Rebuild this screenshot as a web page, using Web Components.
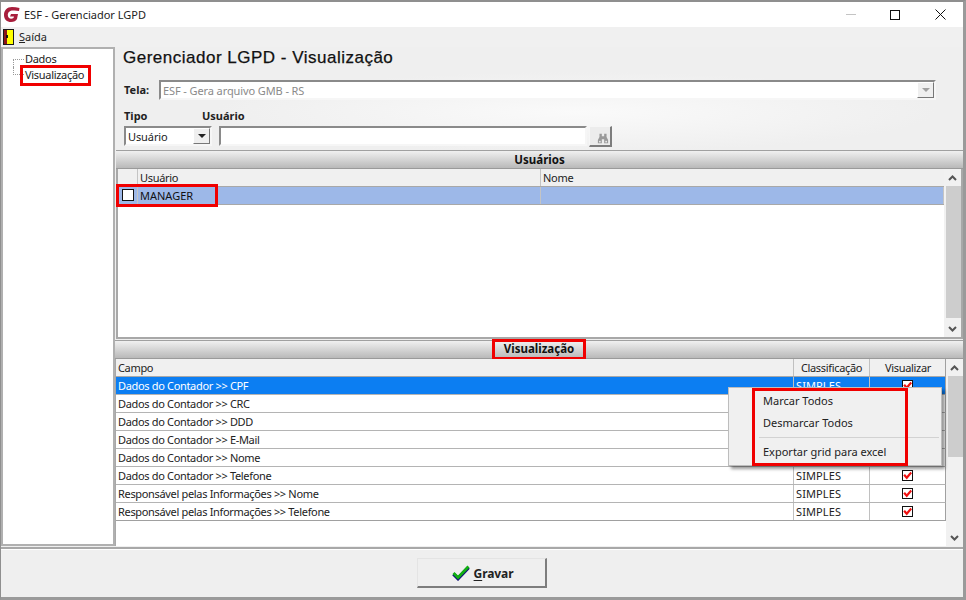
<!DOCTYPE html>
<html lang="pt-BR">
<head>
<meta charset="utf-8">
<title>ESF - Gerenciador LGPD</title>
<style>
  html, body { margin: 0; height: 100%; overflow: hidden; background: #fff; }
  body { font: 11px "Noto Sans", "Liberation Sans", sans-serif; color: #111; }
</style>
</head>
<body>
<lgpd-window></lgpd-window>

<script>
const check = `<svg viewBox="0 0 12 12"><path d="M1.500 5 L5 9 L11 2" fill="none" stroke="#f01010" stroke-width="3"/></svg>`;

class TitleBar extends HTMLElement {
  constructor() {
    super();
    this.attachShadow({ mode: "open" });
    this.shadowRoot.innerHTML = `
      <style>
        :host { display: flex; align-items: center; height: 25px; background: #fff; padding-left: 2px; }
        svg { display: block; }
        .title { margin-left: 4px; padding-bottom: 1px; font-size: 11px; color: #222; flex: 1; }
        .ctl { width: 45px; height: 25px; display: flex; align-items: center; justify-content: center; }
        .max svg { margin-right: 1px; }
      </style>
      <svg width="17" height="17" viewBox="0 0 17 17">
        <path d="M9 1 C4 1 1 4.500 1 9 C1 13.500 4 16 8 16 C11 16 13 15 14 13 L15 8 L8 8 L7 10.500 L11 10.500 L10.500 12 C8 13.500 4.800 12.500 4.800 9 C4.800 5.500 8 3.800 11.500 4.600 L16 5 L16.500 2 C14 1.300 11.500 1 9 1 Z" fill="#a81e3c"/>
      </svg>
      <span class="title">ESF - Gerenciador LGPD</span>
      <span class="ctl"><svg width="10" height="2"><rect width="10" height="1" fill="#c4c4c4"/></svg></span>
      <span class="ctl max"><svg width="10" height="10"><rect x=".5" y=".5" width="9" height="9" fill="none" stroke="#111"/></svg></span>
      <span class="ctl"><svg width="11" height="11"><path d="M.5 .5 L10.500 10.500 M10.500 .5 L.5 10.500" stroke="#111" fill="none"/></svg></span>
    `;
  }
}

class MenuBar extends HTMLElement {
  constructor() {
    super();
    this.attachShadow({ mode: "open" });
    this.shadowRoot.innerHTML = `
      <style>
        :host { display: flex; align-items: center; height: 20px; background: #f0f0f0; padding-left: 2px; gap: 5px; font-size: 11px; color: #222; }
        span { padding-bottom: 1px; }
        u { text-underline-offset: 1px; }
      </style>
      <svg width="11" height="16" viewBox="0 0 11 16">
        <rect width="11" height="16" fill="#1a1a1a"/>
        <rect x="1" y="1" width="3" height="14" fill="#8c1418"/>
        <rect x="4" y="1" width="6" height="14" fill="#ffff00"/>
        <rect x="3" y="6" width="2" height="3" fill="#111"/>
      </svg>
      <span><u>S</u>aída</span>
    `;
  }
}

class TreeNav extends HTMLElement {
  constructor() {
    super();
    this.attachShadow({ mode: "open" });
    this.shadowRoot.innerHTML = `
      <style>
        :host { display: block; width: 110px; background: #fff; border: 2px solid #b0b0b0; padding-top: 2px; font-size: 11px; letter-spacing: -.3px; color: #222; box-sizing: content-box; }
        .row { display: flex; align-items: center; height: 16px; padding-left: 10px; }
        .dots { width: 11px; height: 8px; margin-right: 1px; border-left: 1px dotted #999; box-sizing: border-box; }
        .first { align-self: flex-end; border-top: 1px dotted #999; }
        .second { align-self: flex-start; border-bottom: 1px dotted #999; }
        .t { padding-bottom: 1px; }
        .mark { outline: 3px solid #f00000; margin-left: -2px; padding: 0 4px 1px 2px; line-height: 14px; }
      </style>
      <div class="row"><span class="dots first"></span><span class="t">Dados</span></div>
      <div class="row"><span class="dots second"></span><span class="mark">Visualização</span></div>
    `;
  }
}

class ComboBox extends HTMLElement {
  constructor() {
    super();
    this.attachShadow({ mode: "open" });
  }
  connectedCallback() {
    const disabled = this.hasAttribute("disabled");
    this.shadowRoot.innerHTML = `
      <style>
        :host { display: flex; height: 20px; box-sizing: border-box; background: #fff; border: 2px solid #8a8a8a; border-right-color: #f6f6f6; border-bottom-color: #f6f6f6; font-size: 11px; letter-spacing: -.1px; align-items: center; color: ${disabled ? "#8a8a8a" : "#222"}; }
        .v { flex: 1; padding-left: 2px; white-space: nowrap; overflow: hidden; }
        .btn { width: 17px; height: 16px; background: #efefef; border: 1px solid #fff; border-right-color: #777; border-bottom-color: #777; display: flex; align-items: center; justify-content: center; box-sizing: border-box; }
        .btn i { width: 0; height: 0; border: 4px solid transparent; border-top: 4px solid ${disabled ? "#a0a0a0" : "#222"}; border-bottom: 0; }
      </style>
      <span class="v">${this.getAttribute("value")}</span>
      <span class="btn"><i></i></span>
    `;
  }
}

class PanelHead extends HTMLElement {
  constructor() {
    super();
    this.attachShadow({ mode: "open" });
    this.shadowRoot.innerHTML = `
      <style>
        :host { display: flex; justify-content: center; align-items: center; height: 19px; box-sizing: border-box; background: linear-gradient(#f0f0f0, #b9b9b9); border-top: 1px solid #a0a0a0; border-bottom: 1px solid #9a9a9a; font-weight: 700; font-size: 11.5px; color: #111; }
      </style>
      <slot></slot>
    `;
  }
}

class ScrollBar extends HTMLElement {
  constructor() {
    super();
    this.attachShadow({ mode: "open" });
  }
  connectedCallback() {
    const thumb = this.getAttribute("thumb");
    this.shadowRoot.innerHTML = `
      <style>
        :host { display: flex; flex-direction: column; width: 17px; height: 100%; background: #f1f1f1; flex: none; box-sizing: border-box; }
        .arrow { height: 17px; display: flex; align-items: center; justify-content: center; flex: none; }
        .track { flex: 1; padding-left: 2px; }
        .thumb { height: ${thumb}px; background: #cdcdcd; }
      </style>
      <span class="arrow"><svg width="9" height="6"><path d="M1 5 L4.500 1.500 L8 5" fill="none" stroke="#555" stroke-width="2"/></svg></span>
      <div class="track"><div class="thumb"></div></div>
      <span class="arrow"><svg width="9" height="6"><path d="M1 1 L4.500 4.500 L8 1" fill="none" stroke="#555" stroke-width="2"/></svg></span>
    `;
  }
}

class UserGrid extends HTMLElement {
  constructor() {
    super();
    this.attachShadow({ mode: "open" });
    this.shadowRoot.innerHTML = `
      <style>
        :host { display: flex; height: 170px; background: #fff; border: 2px solid #a8a8a8; border-top: 0; box-sizing: border-box; font-size: 11px; color: #222; }
        .body { flex: 1; min-width: 0; }
        .row { display: grid; grid-template-columns: 20px 403px 1fr; height: 18px; box-sizing: border-box; align-items: center; border-bottom: 1px solid #a8a8a8; }
        .row > span { height: 100%; display: flex; align-items: center; padding: 0 0 1px 2px; box-sizing: border-box; border-right: 1px solid #c4c4c4; }
        .row > span:last-child { border-right: 0; }
        .head { background: #f0f0f0; letter-spacing: -.3px; }
        .sel { background: #9db8e8; position: relative; color: #111; }
        .box { width: 10px; height: 10px; border: 1px solid #111; background: #fff; margin-left: 2px; }
        .mark { position: absolute; left: -2px; top: -3px; width: 102px; height: 23px; border: 3px solid #f00000; box-sizing: border-box; }
      </style>
      <div class="body">
        <div class="row head"><span></span><span>Usuário</span><span>Nome</span></div>
        <div class="row sel"><span><i class="box"></i></span><span>MANAGER</span><span></span><b class="mark"></b></div>
      </div>
      <scroll-bar thumb="132"></scroll-bar>
    `;
  }
}

class FieldGrid extends HTMLElement {
  constructor() {
    super();
    this.attachShadow({ mode: "open" });
    const rows = [
      "Dados do Contador >> CPF",
      "Dados do Contador >> CRC",
      "Dados do Contador >> DDD",
      "Dados do Contador >> E-Mail",
      "Dados do Contador >> Nome",
      "Dados do Contador >> Telefone",
      "Responsável pelas Informações >> Nome",
      "Responsável pelas Informações >> Telefone"
    ];
    // rows 1-4 sit fully behind the context menu, their last two cells never show
    const hidden = i => i >= 1 && i <= 4;
    this.shadowRoot.innerHTML = `
      <style>
        :host { display: flex; flex: 1; min-height: 0; background: #fff; border-left: 1px solid #a8a8a8; font-size: 11px; letter-spacing: -.33px; color: #222; }
        .body { flex: 1; min-width: 0; }
        .row { display: grid; grid-template-columns: 678px 76px 76px; height: 18px; box-sizing: border-box; border-bottom: 1px solid #b4b4b4; border-right: 1px solid #a0a0a0; }
        .row:last-child { border-bottom-color: #a0a0a0; }
        .row > span { display: flex; align-items: center; padding: 0 0 1px 2px; border-right: 1px solid #c0c0c0; box-sizing: border-box; white-space: nowrap; overflow: hidden; }
        .row > span:last-child { border-right: 0; }
        .head { background: #f0f0f0; border-bottom-color: #a8a8a8; }
        .head > span:not(:first-child) { justify-content: center; padding: 0 0 1px; }
        .row.sel { background: #0c7ef2; color: #fff; }
        .s { letter-spacing: .1px; }
        .row > .c { justify-content: center; padding: 0 1px 0 0; }
        .cb { width: 9px; height: 9px; border: 1px solid #111; background: #fff; display: block; }
        .cb svg { display: block; width: 9px; height: 9px; }
      </style>
      <div class="body">
        <div class="row head"><span>Campo</span><span>Classificação</span><span>Visualizar</span></div>
        ${rows.map((r, i) => `
          <div class="row${i === 0 ? " sel" : ""}">
            <span>${r.replace(/>>/g, "&gt;&gt;")}</span>
            <span class="s">${hidden(i) ? "" : "SIMPLES"}</span>
            <span class="c">${hidden(i) ? "" : `<i class="cb">${check}</i>`}</span>
          </div>`).join("")}
      </div>
      <scroll-bar thumb="81"></scroll-bar>
    `;
  }
}

class ContextMenu extends HTMLElement {
  constructor() {
    super();
    this.attachShadow({ mode: "open" });
    this.shadowRoot.innerHTML = `
      <style>
        :host { position: absolute; left: 727px; top: 385px; width: 214px; height: 79px; box-sizing: border-box; background: #f0f0f0; border: 1px solid #bdbdbd; box-shadow: 3px 3px 3px rgba(0,0,0,.4); font-size: 11px; color: #222; padding-top: 2px; }
        .it { height: 22px; box-sizing: border-box; display: flex; align-items: center; padding: 0 0 2px 34px; }
        hr { margin: 3px 2px 3px 30px; border: 0; border-top: 1px solid #d2d2d2; }
        .mark { position: absolute; left: 23px; top: 0; width: 156px; height: 78px; border: 3px solid #f00000; box-sizing: border-box; }
      </style>
      <div class="it">Marcar Todos</div>
      <div class="it">Desmarcar Todos</div>
      <hr>
      <div class="it">Exportar grid para excel</div>
      <b class="mark"></b>
    `;
  }
}

class SaveButton extends HTMLElement {
  constructor() {
    super();
    this.attachShadow({ mode: "open" });
    this.shadowRoot.innerHTML = `
      <style>
        :host { display: flex; align-items: center; justify-content: center; gap: 4px; width: 130px; height: 30px; box-sizing: border-box; padding-left: 2px; background: #efefef; border: 1px solid #e4e4e4; border-right: 2px solid #7d7d7d; border-bottom: 2px solid #7d7d7d; font-weight: 700; font-size: 12px; letter-spacing: -.1px; color: #222; }
        span { padding-top: 2px; }
        u { text-underline-offset: 2px; }
      </style>
      <svg width="18" height="16" viewBox="0 0 18 16">
        <path d="M1.500 9 L6 13.500 L16.500 2.500" fill="none" stroke="#10107a" stroke-width="3.6"/>
        <path d="M1.500 8 L6 12.500 L16.500 1.500" fill="none" stroke="#12b012" stroke-width="2.8"/>
      </svg>
      <span><u>G</u>ravar</span>
    `;
  }
}

class LgpdWindow extends HTMLElement {
  constructor() {
    super();
    this.attachShadow({ mode: "open" });
    this.shadowRoot.innerHTML = `
      <style>
        :host { display: flex; flex-direction: column; position: relative; width: 966px; height: 600px; box-sizing: border-box; border: 2px solid #8f8f8f; border-left-width: 1px; border-right: 3px solid #9a9a9a; border-bottom: 3px solid #9a9a9a; background: #efefef; overflow: hidden; }
        .work { display: flex; flex: none; height: 499px; }
        tree-nav { flex: none; }
        .main { flex: 1; min-width: 0; display: flex; flex-direction: column; margin-left: 1px; padding-top: 1px;
          background: radial-gradient(ellipse 360px 40px at 460px 65px, #fafafa, #efefef); }
        h1 { margin: 0 0 0 7px; height: 27px; font: 400 17px/19px "Liberation Sans", sans-serif; letter-spacing: .5px; color: #111; -webkit-text-stroke: .25px #111; }
        .tela { display: flex; align-items: center; margin: 5px 0 0 8px; }
        b.lbl { font-weight: 700; font-size: 11px; color: #222; }
        .tela b.lbl { width: 35px; padding-bottom: 1px; }
        .tela combo-box { width: 777px; }
        .labels { display: flex; margin: 7px 0 0 8px; height: 16px; align-items: center; }
        .labels b:first-child { width: 78px; }
        .filter { display: flex; margin: 3px 0 0 8px; height: 20px; align-items: stretch; }
        .filter combo-box { width: 88px; }
        .input { width: 368px; margin-left: 7px; background: #fff; border: 2px solid #8a8a8a; border-right-color: #f6f6f6; border-bottom-color: #f6f6f6; box-sizing: border-box; }
        .find { width: 23px; height: 21px; margin-left: 2px; border: 1px solid #f6f6f6; border-right: 2px solid #7d7d7d; border-bottom: 2px solid #7d7d7d; box-sizing: border-box; display: flex; align-items: flex-end; justify-content: flex-end; padding: 0 1px 1px 0; background: #ececec; }
        .find svg { opacity: .85; }
        .users { margin-top: 4px; }
        .fields { display: flex; flex-direction: column; flex: 1; min-height: 0; margin: 1px 0 0 -1px; }
        .vmark { outline: 3px solid #f00000; padding: 0 9px 1px; line-height: 14px; }
        .foot { height: 50px; flex: none; display: flex; align-items: center; justify-content: center; border-top: 2px solid #a8a8a8; box-shadow: inset 0 1px 0 #fff; box-sizing: border-box; margin-top: 1px; }
      </style>
      <title-bar></title-bar>
      <menu-bar></menu-bar>
      <div class="work">
        <tree-nav></tree-nav>
        <div class="main">
          <h1>Gerenciador LGPD - Visualização</h1>
          <div class="tela"><b class="lbl">Tela:</b><combo-box value="ESF - Gera arquivo GMB - RS" disabled></combo-box></div>
          <div class="labels"><b class="lbl">Tipo</b><b class="lbl">Usuário</b></div>
          <div class="filter">
            <combo-box value="Usuário"></combo-box>
            <div class="input"></div>
            <div class="find">
              <svg width="12" height="11" viewBox="0 0 15 14"><path d="M3 1h3v3h3V1h3v4l2 4v4H9V8H6v5H1V9l2-4z" fill="#8c8c8c"/><rect x="2.500" y="10" width="2" height="2" fill="#eee"/><rect x="10.500" y="10" width="2" height="2" fill="#eee"/></svg>
            </div>
          </div>
          <div class="users">
            <panel-head>Usuários</panel-head>
            <user-grid></user-grid>
          </div>
          <div class="fields">
            <panel-head><span class="vmark">Visualização</span></panel-head>
            <field-grid></field-grid>
          </div>
        </div>
      </div>
      <div class="foot"><save-button></save-button></div>
      <context-menu></context-menu>
    `;
  }
}

customElements.define("title-bar", TitleBar);
customElements.define("menu-bar", MenuBar);
customElements.define("tree-nav", TreeNav);
customElements.define("combo-box", ComboBox);
customElements.define("panel-head", PanelHead);
customElements.define("scroll-bar", ScrollBar);
customElements.define("user-grid", UserGrid);
customElements.define("field-grid", FieldGrid);
customElements.define("context-menu", ContextMenu);
customElements.define("save-button", SaveButton);
customElements.define("lgpd-window", LgpdWindow);
</script>
</body>
</html>
